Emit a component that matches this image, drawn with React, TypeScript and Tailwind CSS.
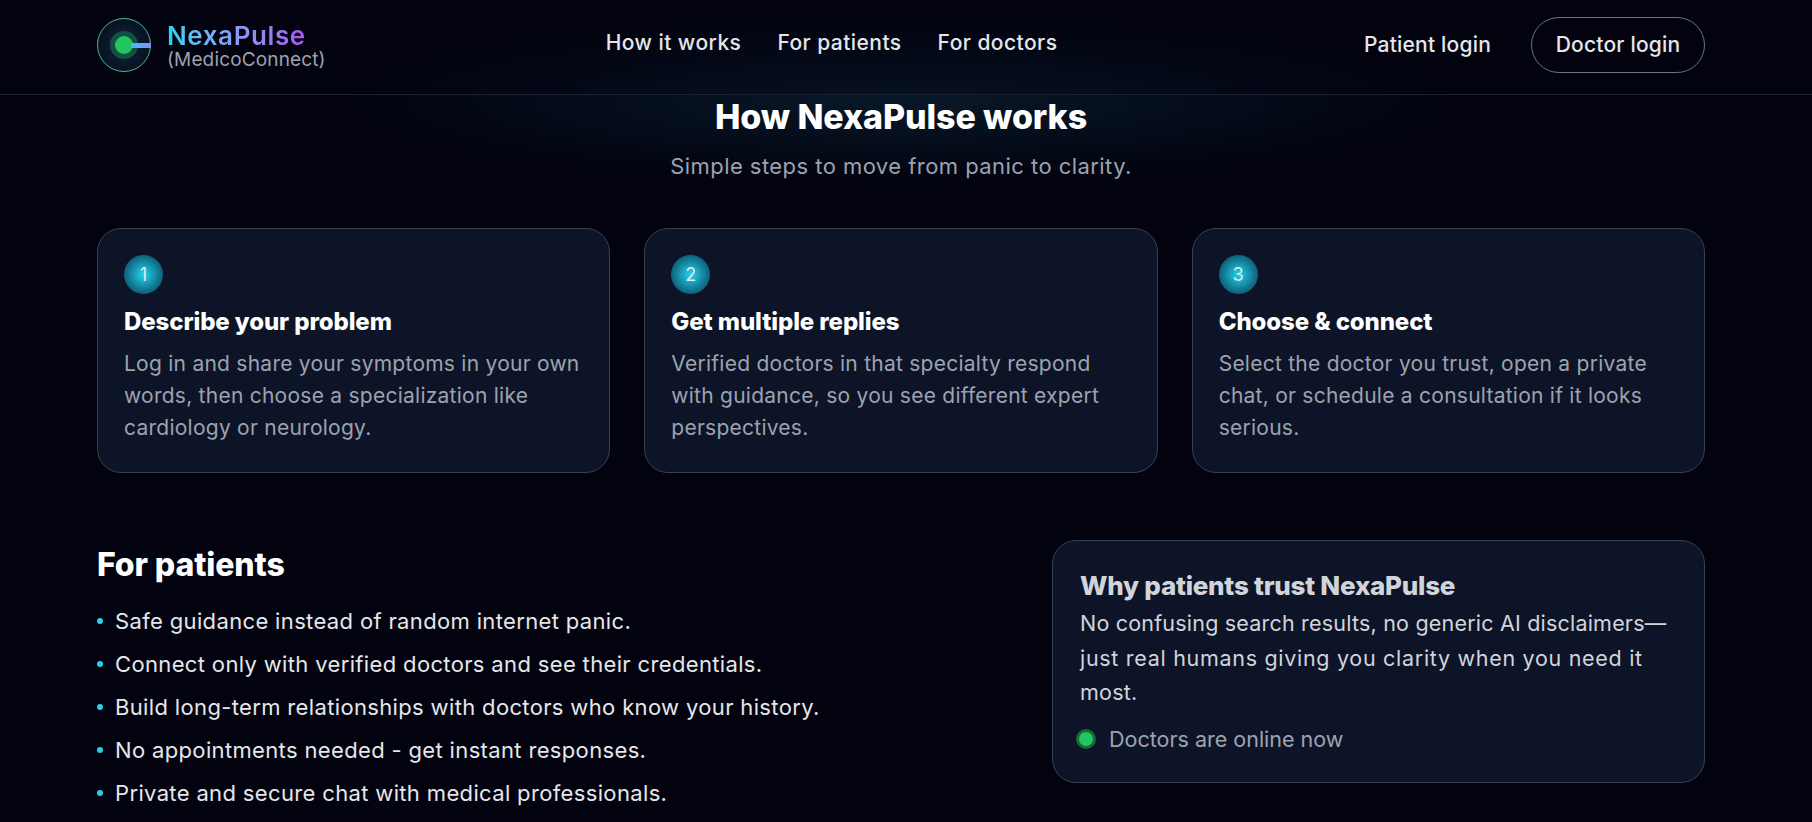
import React from "react";

const FONT = { fontFamily: "Inter, 'Noto Sans', sans-serif" };

const STEPS = [
  {
    n: "1",
    title: "Describe your problem",
    lines: ["Log in and share your symptoms in your own", "words, then choose a specialization like", "cardiology or neurology."],
  },
  {
    n: "2",
    title: "Get multiple replies",
    lines: ["Verified doctors in that specialty respond", "with guidance, so you see different expert", "perspectives."],
  },
  {
    n: "3",
    title: "Choose & connect",
    lines: ["Select the doctor you trust, open a private", "chat, or schedule a consultation if it looks", "serious."],
  },
];

const PATIENT_POINTS = [
  "Safe guidance instead of random internet panic.",
  "Connect only with verified doctors and see their credentials.",
  "Build long-term relationships with doctors who know your history.",
  "No appointments needed - get instant responses.",
  "Private and secure chat with medical professionals.",
];

function Logo() {
  return (
    <div className="flex items-center gap-[16px]">
      <div className="relative h-[54px] w-[54px] shrink-0 rounded-full border border-[#4fb88f] bg-[radial-gradient(circle,#10263a_0%,#050a18_100%)]">
        <div className="absolute left-[12px] top-[12px] h-[28px] w-[28px] rounded-full bg-[#14503f]" />
        <div className="absolute left-[17px] top-[17px] h-[18px] w-[18px] rounded-full bg-[#22c55e]" />
        <div className="absolute left-[33px] top-[24px] h-[5px] w-[20px] bg-gradient-to-r from-[#38bdf8] to-[#818cf8]" />
      </div>
      <div className="flex flex-col pt-[2px]">
        <span className="w-fit bg-gradient-to-r from-[#22d3ee] to-[#a855f7] bg-clip-text text-[26px] font-semibold leading-[28px] tracking-[0.6px] text-transparent">
          NexaPulse
        </span>
        <span className="text-[19px] leading-[20px] tracking-[0.15px] text-[#9ca3af]">(MedicoConnect)</span>
      </div>
    </div>
  );
}

function Header() {
  return (
    <header className="flex h-[95px] shrink-0 items-center border-b border-[#1c2030] bg-[#02030f]/30 pb-[5px] pl-[97px] pr-[107px]">
      <Logo />
      <nav className="mb-[4px] ml-[280px] flex gap-[36px] text-[21px] font-medium tracking-[0.45px] text-[#e5e7eb]">
        <a>How it works</a>
        <a>For patients</a>
        <a>For doctors</a>
      </nav>
      <div className="ml-auto flex items-center gap-[40px] text-[21px] font-medium tracking-[0.2px] text-[#e5e7eb]">
        <a>Patient login</a>
        <a className="flex h-[56px] w-[174px] items-center justify-center rounded-full border border-[#6b7280]">Doctor login</a>
      </div>
    </header>
  );
}

function StepCard({ step }: { step: (typeof STEPS)[number] }) {
  return (
    <div className="h-[245px] rounded-[24px] border border-[#374151] bg-[#0e1428] px-[26px] pt-[26px]">
      <div className="flex h-[39px] w-[39px] items-center justify-center rounded-full bg-[radial-gradient(circle_closest-side,#22d3ee_0%,#0f5f78_100%)] text-[18px] text-[#e5e7eb]">
        {step.n}
      </div>
      <h3 className="mt-[12px] text-[24px] font-extrabold leading-[32px] tracking-[-0.1px] text-white">{step.title}</h3>
      <p className="mt-[10px] text-[21px] leading-[32px] tracking-[0.25px] text-[#9ca3af]">
        {step.lines.map((l) => (
          <span key={l} className="block whitespace-nowrap">
            {l}
          </span>
        ))}
      </p>
    </div>
  );
}

export default function App() {
  return (
    <div
      style={FONT}
      className="flex h-[822px] flex-col overflow-hidden bg-[#02030f] bg-[radial-gradient(ellipse_560px_80px_at_900px_100px,#081828_0%,#02030f_100%)]"
    >
      <Header />
      <main className="flex flex-col pl-[97px] pr-[107px]">
        <h1 className="text-center text-[34px] font-extrabold leading-[44px] tracking-[-0.1px] text-white">How NexaPulse works</h1>
        <p className="mt-[11px] text-center text-[22px] leading-[32px] tracking-[0.45px] text-[#9ca3af]">Simple steps to move from panic to clarity.</p>

        <div className="mt-[46px] grid grid-cols-3 gap-[34px]">
          {STEPS.map((s) => (
            <StepCard key={s.n} step={s} />
          ))}
        </div>

        <div className="mt-[67px] flex justify-between">
          <div>
            <h2 className="mt-[5px] text-[32px] font-extrabold leading-[40px] tracking-[-0.1px] text-white">For patients</h2>
            <ul className="mt-[20px] flex flex-col gap-[11px] text-[22px] leading-[32px] tracking-[0.35px] text-[#e5e7eb]">
              {PATIENT_POINTS.map((p) => (
                <li key={p} className="flex items-center gap-[12px] whitespace-nowrap">
                  <span className="h-[6px] w-[6px] rounded-full bg-[#22d3ee]" />
                  {p}
                </li>
              ))}
            </ul>
          </div>
          <aside className="h-[243px] w-[653px] rounded-[24px] border border-[#374151] bg-[#0e1428] px-[27px] pt-[29px]">
            <h3 className="text-[26px] font-extrabold leading-[32px] tracking-[-0.25px] text-[#d1d5db]">Why patients trust NexaPulse</h3>
            <p className="mt-[4px] text-[21.5px] leading-[34.5px] tracking-[0.2px] text-[#d1d5db]">
              <span className="block whitespace-nowrap">No confusing search results, no generic AI disclaimers—</span>
              <span className="block whitespace-nowrap tracking-[0.7px]">just real humans giving you clarity when you need it</span>
              <span className="block">most.</span>
            </p>
            <div className="ml-[-4px] mt-[13px] flex items-center gap-[13px] text-[21.5px] text-[#9ca3af]">
              <span className="h-[20px] w-[20px] rounded-full border-[3px] border-[#17693a] bg-[#22c55e]" />
              Doctors are online now
            </div>
          </aside>
        </div>
      </main>
    </div>
  );
}
